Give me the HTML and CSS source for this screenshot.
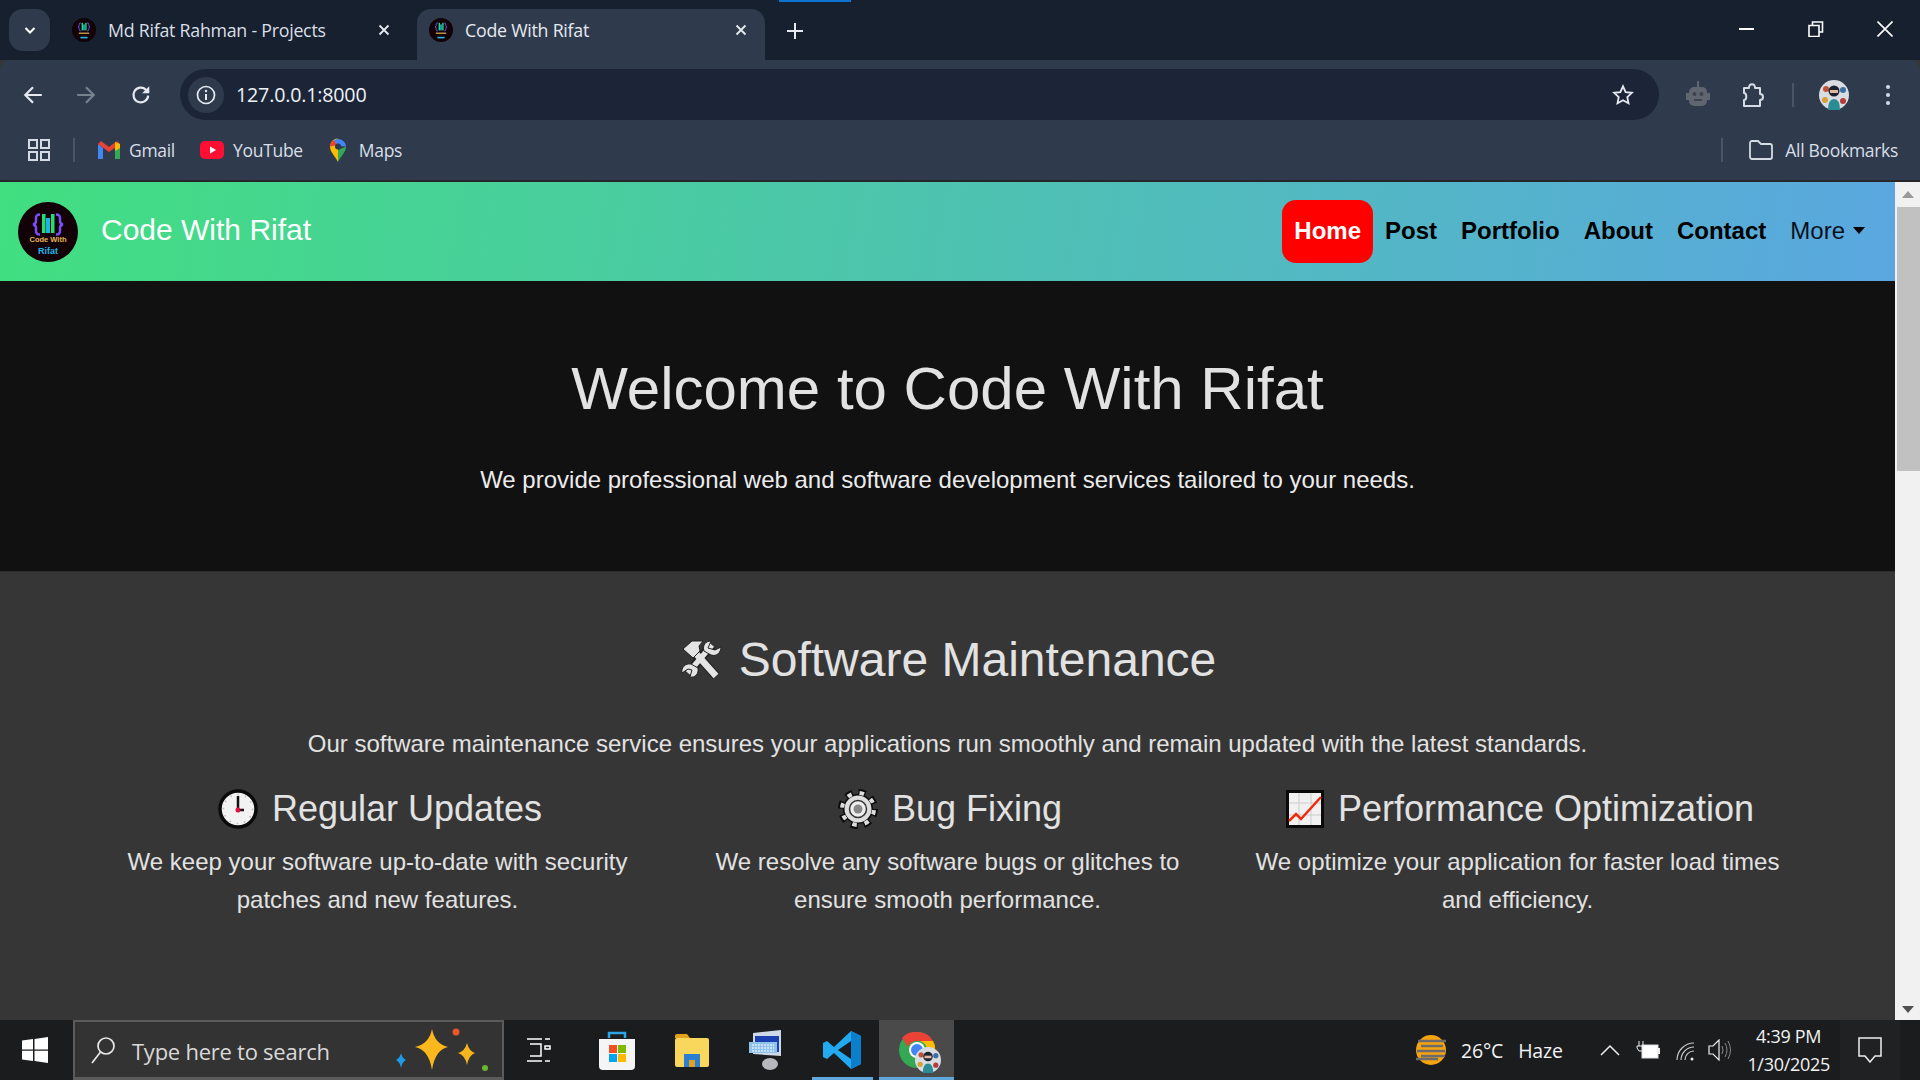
FILE: index.html
```html
<!doctype html>
<html lang="en">
<head>
  <meta charset="utf-8" />
  <meta name="viewport" content="width=device-width, initial-scale=1" />
  <title>Code With Rifat</title>
  <link rel="stylesheet" href="styles.css">
</head>
<body>
  <svg class="defs" width="0" height="0" aria-hidden="true">
    <symbol id="logo-mark" viewBox="0 0 60 60">
      <circle cx="30" cy="30" r="30" fill="#120207"/>
      <path d="M22 12.500q-4 0-4 3.500v3q0 3-3 3.500 3 .5 3 3.500v3q0 3.500 4 3.500M38 12.500q4 0 4 3.500v3q0 3 3 3.500-3 .5-3 3.500v3q0 3.500-4 3.500" fill="none" stroke="#7c4dff" stroke-width="2.400"/>
      <rect x="24" y="12" width="3.500" height="19" fill="#1fe070"/>
      <rect x="28" y="16" width="4" height="15" fill="#1eb4e6"/>
      <rect x="33" y="12" width="3.500" height="19" fill="#1fe070"/>
    </symbol>
    <symbol id="avatar" viewBox="0 0 30 30">
      <circle cx="15" cy="15" r="15" fill="#d9dde2"/>
      <circle cx="7" cy="9" r="3" fill="#c0523c"/>
      <circle cx="24" cy="10" r="3" fill="#3a6ea5"/>
      <circle cx="6" cy="20" r="3" fill="#d4a037"/>
      <circle cx="24" cy="21" r="3" fill="#b43c3c"/>
      <path d="M9 30 q0-11 6-11 t6 11z" fill="#2a8d96"/>
      <circle cx="15" cy="11" r="5.500" fill="#1d2430"/>
      <rect x="11" y="10" width="8" height="3" fill="#e3b8a0"/>
    </symbol>
  </svg>

  <div class="tabstrip">
    <button class="tabs-menu" aria-label="Search tabs">
      <svg width="14" height="14" viewBox="0 0 14 14"><path d="M2.500 5l4.500 4.500L11.500 5" fill="none" stroke="#fff" stroke-width="2"/></svg>
    </button>
    <div class="tab">
      <svg class="favicon" viewBox="0 0 60 60"><use href="#logo-mark"/><path d="M17 38h26" stroke="#e8b45a" stroke-width="3"/><path d="M21 49h18" stroke="#22b8e8" stroke-width="4"/></svg>
      <span class="tab-title">Md Rifat Rahman - Projects</span>
      <svg class="tab-close" viewBox="0 0 12 12"><path d="M1.500 1.500l9 9M10.500 1.500l-9 9" stroke="#e6eaf0" stroke-width="1.800"/></svg>
    </div>
    <div class="tab active">
      <svg class="favicon" viewBox="0 0 60 60"><use href="#logo-mark"/><path d="M17 38h26" stroke="#e8b45a" stroke-width="3"/><path d="M21 49h18" stroke="#22b8e8" stroke-width="4"/></svg>
      <span class="tab-title">Code With Rifat</span>
      <svg class="tab-close" viewBox="0 0 12 12"><path d="M1.500 1.500l9 9M10.500 1.500l-9 9" stroke="#e6eaf0" stroke-width="1.800"/></svg>
    </div>
    <svg class="new-tab" width="16" height="16" viewBox="0 0 16 16"><path d="M8 0v16M0 8h16" stroke="#e6eaf0" stroke-width="2"/></svg>
    <div class="load-bar"></div>
    <div class="win-btns">
      <svg width="16" height="16" viewBox="0 0 16 16"><path d="M0 8h15" stroke="#fff" stroke-width="2"/></svg>
      <svg width="16" height="16" viewBox="0 0 16 16"><path d="M1 4.500h10v11H1zM4.500 4V1h10v10H11.500" fill="none" stroke="#fff" stroke-width="1.600"/></svg>
      <svg width="16" height="16" viewBox="0 0 16 16"><path d="M.5.500l15 15M15.500.500l-15 15" stroke="#fff" stroke-width="1.600"/></svg>
    </div>
  </div>

  <div class="toolbar">
    <svg class="nav-ico back" viewBox="0 0 20 20"><path d="M18 10H3M10 3l-7 7 7 7" fill="none" stroke="#e6eaf0" stroke-width="2"/></svg>
    <svg class="nav-ico forward" viewBox="0 0 20 20"><path d="M2 10h15M10 3l7 7-7 7" fill="none" stroke="#78828f" stroke-width="2"/></svg>
    <svg class="nav-ico reload" viewBox="0 0 20 20"><path d="M16.500 10.500a6.700 6.700 0 1 1-2-5.300L17 7.500" fill="none" stroke="#e6eaf0" stroke-width="2"/><path d="M17.500 2v6.500H11z" fill="#e6eaf0"/></svg>
    <div class="omnibox">
      <span class="site-info">
        <svg width="20" height="20" viewBox="0 0 20 20"><circle cx="10" cy="10" r="8.500" fill="none" stroke="#e6eaf0" stroke-width="1.700"/><path d="M10 9v6" stroke="#e6eaf0" stroke-width="2"/><circle cx="10" cy="6" r="1.200" fill="#e6eaf0"/></svg>
      </span>
      <span class="url">127.0.0.1:8000</span>
      <svg class="star" width="22" height="22" viewBox="0 0 24 24"><path d="M12 2.500l2.900 6.300 6.800.8-5 4.700 1.300 6.800-6-3.400-6 3.400 1.300-6.800-5-4.700 6.800-.8z" fill="none" stroke="#e6eaf0" stroke-width="2"/></svg>
    </div>
    <div class="toolbar-right">
      <svg width="24" height="28" viewBox="0 0 24 28"><path d="M12 0v6" stroke="#5f6670" stroke-width="2"/><rect x="3" y="6" width="18" height="19" rx="5" fill="#5f6670"/><rect x="0" y="12" width="3" height="7" fill="#5f6670"/><rect x="21" y="12" width="3" height="7" fill="#5f6670"/><circle cx="8.500" cy="13" r="2" fill="#3d444e"/><circle cx="15.500" cy="13" r="2" fill="#3d444e"/><path d="M8 19h8" stroke="#3d444e" stroke-width="2"/></svg>
      <svg width="24" height="26" viewBox="0 0 24 26"><path d="M3 6h5c0-5 6-5 6 0h5v6c4 0 4 6 0 6v6H3v-6c3 0 3-7 0-7z" fill="none" stroke="#d4dbe4" stroke-width="2" stroke-linejoin="round"/></svg>
      <span class="tool-sep"></span>
      <svg class="avatar"><use href="#avatar"/></svg>
      <svg width="6" height="24" viewBox="0 0 6 24"><circle cx="3" cy="4" r="2" fill="#d4dbe4"/><circle cx="3" cy="12" r="2" fill="#d4dbe4"/><circle cx="3" cy="20" r="2" fill="#d4dbe4"/></svg>
    </div>
  </div>

  <div class="bookmarks">
    <svg class="apps" width="22" height="22" viewBox="0 0 22 22"><g fill="none" stroke="#d4dbe4" stroke-width="2"><rect x="1" y="1" width="8" height="8"/><rect x="13" y="1" width="8" height="8"/><rect x="1" y="13" width="8" height="8"/><rect x="13" y="13" width="8" height="8"/></g></svg>
    <span class="bm-sep"></span>
    <span class="bm gmail">
      <svg width="22" height="18" viewBox="0 0 22 18"><path d="M0 3v15h5V7z" fill="#4285f4"/><path d="M22 3v15h-5V7z" fill="#34a853"/><path d="M0 3l11 8 11-8-3-3-8 6-8-6z" fill="#ea4335"/><path d="M17 1l5 2v4l-5 3z" fill="#fbbc04"/></svg>
      Gmail
    </span>
    <span class="bm youtube">
      <svg width="24" height="18" viewBox="0 0 24 18"><rect width="24" height="18" rx="5" fill="#ff0f33"/><path d="M10 5.500l6 3.500-6 3.500z" fill="#fff"/></svg>
      YouTube
    </span>
    <span class="bm maps">
      <svg width="18" height="24" viewBox="0 0 18 24"><path d="M9 24C6 18 1 14 1 8.500A8 8 0 0 1 9 .5z" fill="#fbbc04"/><path d="M9 24c3-6 8-10 8-15.500L9 12z" fill="#34a853"/><path d="M1 8.500A8 8 0 0 1 5 2l4 5z" fill="#ea4335"/><path d="M5 2a8 8 0 0 1 12 6.500L9 8z" fill="#4285f4"/><circle cx="9" cy="8.500" r="3" fill="#2f3b4d"/></svg>
      Maps
    </span>
    <span class="bm-sep right"></span>
    <span class="bm all">
      <svg width="24" height="20" viewBox="0 0 24 20"><path d="M1 3a2 2 0 0 1 2-2h6l3 3h9a2 2 0 0 1 2 2v11a2 2 0 0 1-2 2H3a2 2 0 0 1-2-2z" fill="none" stroke="#d4dbe4" stroke-width="1.800"/></svg>
      All Bookmarks
    </span>
  </div>

  <div class="viewport">
    <div class="page">
      <nav class="navbar">
        <svg class="logo" viewBox="0 0 60 60">
          <use href="#logo-mark"/>
          <text x="30" y="40" class="logo-line1">Code With</text>
          <text x="30" y="52" class="logo-line2">Rifat</text>
        </svg>
        <a class="brand">Code With Rifat</a>
        <ul class="nav-links">
          <li class="current">Home</li>
          <li>Post</li>
          <li>Portfolio</li>
          <li>About</li>
          <li>Contact</li>
          <li class="more">More<span class="caret"></span></li>
        </ul>
      </nav>

      <header class="hero">
        <h1>Welcome to Code With Rifat</h1>
        <p>We provide professional web and software development services tailored to your needs.</p>
      </header>

      <section class="service">
        <h2>
          <svg width="44" height="42" viewBox="0 0 44 42">
            <g fill="none" stroke-linejoin="round">
              <path d="M12 9L37 37M33 6L9 34" stroke="#222" stroke-width="9"/>
              <path d="M12 9L37 37" stroke="#e4e4e4" stroke-width="6.500"/>
              <path d="M33 6L9 34" stroke="#e4e4e4" stroke-width="5.500"/>
            </g>
            <path d="M4 10L13 2h11l-4 5 1 5-7 7z" fill="#e4e4e4" stroke="#222"/>
            <path d="M29 9l3-7c-5 0-9 4-7 10l7 4c6 2 10-3 10-8l-6 3z" fill="#e4e4e4" stroke="#222"/>
            <path d="M13 31l-2 7c5 1 9-3 8-9l-7-4c-6-1-10 4-9 9l6-4z" fill="#e4e4e4" stroke="#222"/>
          </svg>
          Software Maintenance
        </h2>
        <p class="intro">Our software maintenance service ensures your applications run smoothly and remain updated with the latest standards.</p>
        <div class="features">
          <div class="feature">
            <h3>
              <svg width="40" height="40" viewBox="0 0 40 40"><circle cx="20" cy="20" r="18" fill="#f2f2f2" stroke="#0a0a0a" stroke-width="3.500"/><circle cx="20" cy="20" r="14.500" fill="none" stroke="#bbb" stroke-width="1.500" stroke-dasharray="1.500 6"/><path d="M20 7v14h6" fill="none" stroke="#111" stroke-width="2.500"/><circle cx="20" cy="21" r="2.500" fill="#e0103a"/></svg>
              Regular Updates
            </h3>
            <p>We keep your software up-to-date with security patches and new features.</p>
          </div>
          <div class="feature">
            <h3>
              <svg width="40" height="40" viewBox="0 0 40 40"><circle cx="20" cy="20" r="16.500" fill="none" stroke="#0a0a0a" stroke-width="7" stroke-dasharray="7 5.960"/><circle cx="20" cy="20" r="15" fill="#0a0a0a"/><circle cx="20" cy="20" r="16" fill="none" stroke="#ddd" stroke-width="4" stroke-dasharray="4.500 8.070" stroke-dashoffset="-1.100"/><circle cx="20" cy="20" r="13.500" fill="#ddd"/><circle cx="20" cy="20" r="8.500" fill="#eee" stroke="#333" stroke-width="1.500"/><circle cx="20" cy="20" r="4.500" fill="#888"/></svg>
              Bug Fixing
            </h3>
            <p>We resolve any software bugs or glitches to ensure smooth performance.</p>
          </div>
          <div class="feature">
            <h3>
              <svg width="38" height="38" viewBox="0 0 38 38"><rect x="1.500" y="1.500" width="35" height="35" fill="#f1f1f1" stroke="#0a0a0a" stroke-width="3"/><path d="M13 3v32M25 3v32M3 13h32M3 25h32" stroke="#ccc"/><path d="M3 31l7-7 5 5 20-22" fill="none" stroke="#ee2a10" stroke-width="2.500"/></svg>
              Performance Optimization
            </h3>
            <p>We optimize your application for faster load times and efficiency.</p>
          </div>
        </div>
      </section>
    </div>

    <div class="scrollbar">
      <span class="arrow up"></span>
      <span class="thumb"></span>
      <span class="arrow down"></span>
    </div>
  </div>

  <footer class="taskbar">
    <svg class="start" width="26" height="26" viewBox="0 0 26 26"><path d="M0 3.600l11-1.500v10.300H0zM12.500 1.900L26 0v12.400H12.500zM0 13.800h11v10.100L0 22.400zM12.500 13.800H26V26l-13.500-1.900z" fill="#fff"/></svg>
    <div class="search">
      <svg width="26" height="28" viewBox="0 0 26 28"><circle cx="16" cy="10" r="8" fill="none" stroke="#e8e8e8" stroke-width="1.700"/><path d="M10.500 16L2 27" stroke="#e8e8e8" stroke-width="1.700"/></svg>
      <span>Type here to search</span>
      <svg class="sparkles" width="92" height="46" viewBox="0 0 92 46"><path d="M36 2q3 15 16 18-13 3-16 23-3-20-17-23 14-3 17-18z" fill="#fbb81c"/><path d="M71 16q2 8 8 10-6 2-8 12-2-10-9-12 7-2 9-10z" fill="#f6b51e"/><path d="M5 26q1 5 5 7-4 2-5 8-1-6-5-8 4-2 5-7z" fill="#1e9be8"/><circle cx="60" cy="5" r="3.500" fill="#e8562a"/><circle cx="89" cy="41" r="3" fill="#6cb52e"/></svg>
    </div>
    <div class="task-icons">
      <span class="task view">
        <svg width="24" height="24" viewBox="0 0 24 24"><path d="M0 1h15M0 23h15M3 6h11v12H3M18 1h5M18 8h5v3h-5zM18 23h5" fill="none" stroke="#fff" stroke-width="1.500"/></svg>
      </span>
      <span class="task">
        <svg width="36" height="40" viewBox="0 0 36 40"><path d="M10 8V3h16v5" fill="none" stroke="#2aa5e8" stroke-width="2.500"/><path d="M0 9h36v27a4 4 0 0 1-4 4H4a4 4 0 0 1-4-4z" fill="#f5f5f5"/><rect x="10" y="15" width="8" height="8" fill="#f25022"/><rect x="19" y="15" width="8" height="8" fill="#7fba00"/><rect x="10" y="24" width="8" height="8" fill="#00a4ef"/><rect x="19" y="24" width="8" height="8" fill="#ffb900"/></svg>
      </span>
      <span class="task">
        <svg width="34" height="34" viewBox="0 0 34 34"><path d="M0 3a2 2 0 0 1 2-2h10l3 4H0z" fill="#e6a21a"/><rect y="5" width="34" height="29" rx="2" fill="#f9d65c"/><path d="M9 34V21h16v13h-6v-7h-4v7z" fill="#2a7fd0"/><rect x="14" y="27" width="6" height="7" fill="#e0a11f"/></svg>
      </span>
      <span class="task">
        <svg width="36" height="40" viewBox="0 0 36 40"><path d="M4 3l28-3v26L4 24z" fill="#cfd8e6"/><rect x="6" y="6" width="24" height="16" fill="#1a3fb0"/><rect x="0" y="12" width="28" height="11" fill="#8fc3ea"/><path d="M3 15h22M3 18h22M3 21h22" stroke="#fff" stroke-dasharray="2 1"/><ellipse cx="21" cy="34" rx="8" ry="6" fill="#b5b8bc"/></svg>
      </span>
      <span class="task open">
        <svg width="38" height="38" viewBox="0 0 38 38"><path d="M28 0l10 5v28l-10 5L11 22 4 28l-4-2V12l4-2 7 6z" fill="#23a9f2"/><path d="M28 0l10 5v28l-10 5z" fill="#0b7fcc"/><path d="M28 10L15 19l13 9z" fill="#1a1c1e"/></svg>
      </span>
      <span class="task open current">
        <svg class="chrome" width="36" height="36" viewBox="0 0 36 36"><circle cx="18" cy="18" r="18" fill="#34a853"/><path d="M18 0a18 18 0 0 1 16 9H18a9 9 0 0 0-9 6L3 6a18 18 0 0 1 15-6z" fill="#ea4335"/><path d="M34 9a18 18 0 0 1-14 27l7-14a9 9 0 0 0-9-13z" fill="#fbbc04"/><circle cx="18" cy="18" r="8" fill="#fff"/><circle cx="18" cy="18" r="6" fill="#4285f4"/></svg>
        <svg class="chrome-badge"><use href="#avatar"/></svg>
      </span>
    </div>
    <div class="tray">
      <svg width="32" height="30" viewBox="0 0 32 30"><ellipse cx="16" cy="15" rx="15" ry="15" fill="#f5a30f"/><path d="M3 6h28M6 11h22M2 16h28M6 21h24M1 24h22" stroke="#6c6c6c" stroke-width="2.500"/></svg>
      <span class="weather">26°C<span class="weather-text">Haze</span></span>
      <svg class="chev" width="20" height="12" viewBox="0 0 20 12"><path d="M1 11l9-9 9 9" fill="none" stroke="#eee" stroke-width="1.500"/></svg>
      <svg width="24" height="18" viewBox="0 0 24 18"><path d="M3 0v5M7 0v5M1 5h8v2l-2 3H3L1 7z" fill="none" stroke="#eee" stroke-width="1"/><rect x="6" y="4" width="16" height="13" fill="#fff" stroke="#ddd"/><rect x="22" y="7" width="2" height="6" fill="#eee"/></svg>
      <svg width="22" height="22" viewBox="0 0 22 22"><path d="M3 21a17 17 0 0 1 17-17M7 21A13 13 0 0 1 20 8M11 21a9 9 0 0 1 9-9" fill="none" stroke="#ccc" stroke-width="1.200"/><circle cx="18" cy="20" r="1.500" fill="#eee"/></svg>
      <svg width="24" height="22" viewBox="0 0 24 22"><path d="M1 7h4l6-6v20l-6-6H1z" fill="none" stroke="#eee" stroke-width="1.200"/><path d="M14 7q2 4 0 8M17 4q4 7 0 14M20 2q5 9 0 18" fill="none" stroke="#888"/></svg>
      <div class="clock"><span>4:39 PM</span><span>1/30/2025</span></div>
      <span class="notify">
        <svg width="24" height="26" viewBox="0 0 24 26"><path d="M1 1h22v18h-6l-5 6-5-6H1z" fill="none" stroke="#eee" stroke-width="1.500"/></svg>
      </span>
    </div>
  </footer>
</body>
</html>
```

FILE: styles.css
```css
*{box-sizing:border-box}
html,body{height:100%}
body{
  margin:0; height:1080px; overflow:hidden;
  display:flex; flex-direction:column;
  font-family:"Liberation Sans", Arial, sans-serif;
  background:#363636;
}
.defs{position:absolute}

/* browser chrome */
.tabstrip{
  height:60px; flex:none; background:#16202f; position:relative;
  display:flex; align-items:flex-end; padding-left:9px;
  font-family:"Open Sans", "Noto Sans", sans-serif; font-size:17.800px; color:#d9dfe7;
}
.tabs-menu{
  width:41px; height:42px; border:0; padding:0; margin:0 8px 9px 0; border-radius:14px;
  background:#2f3b4d; display:flex; align-items:center; justify-content:center;
}
.tab{
  width:359px; height:51px; padding:0 27px 9px 14px; border-radius:14px 14px 0 0;
  display:flex; align-items:center;
}
.tab.active{width:348px; padding:0 18px 9px 12px; background:#2f3b4d; color:#e6eaf0}
.favicon{width:24px; height:24px; flex:none}
.tab-title{margin-left:12px; flex:1; letter-spacing:-.25px; white-space:nowrap}
.tab-close{width:12px; height:12px}
.new-tab{margin:0 0 21px 22px}
.load-bar{position:absolute; left:779px; top:0; width:72px; height:2px; background:#0a74d0}
.win-btns{
  margin-left:auto; height:60px; width:181px; padding:21px 27px 0 0;
  display:flex; justify-content:space-between; align-items:flex-start;
}

.toolbar{
  height:62px; flex:none; background:#2f3b4d; border-radius:10px 10px 0 0;
  display:flex; align-items:center; padding:9px 23px 2px 22px;
}
.nav-ico{width:22px; height:22px; flex:none}
.forward{margin-left:31px}
.reload{margin-left:33px}
.omnibox{
  margin-left:28px; width:1479px; height:51px; background:#1b2537; border-radius:26px;
  display:flex; align-items:center; padding:0 25px 0 8px;
  font-family:"Open Sans", "Noto Sans", sans-serif; font-size:19.700px; color:#eef1f5;
}
.site-info{
  width:36px; height:36px; border-radius:50%; background:#2f3b4d;
  display:flex; align-items:center; justify-content:center;
}
.url{margin-left:12px; letter-spacing:-.2px}
.star{margin-left:auto}
.toolbar-right{flex:1; display:flex; align-items:center; padding-left:27px}
.tool-sep{width:2px; height:24px; background:#4a5566; margin:0 25px 0 27px}
.toolbar-right svg:nth-child(2){margin-left:31px}
.avatar{width:30px; height:30px}
.toolbar-right svg:last-child{margin-left:36px}

.bookmarks{
  height:60px; flex:none; background:#2f3b4d; border-bottom:2px solid #26262b;
  display:flex; align-items:center; padding:0 22px 3px 28px;
  font-family:"Open Sans", "Noto Sans", sans-serif; font-size:17.500px; color:#d9dfe7; letter-spacing:-.3px;
}
.bm{display:flex; align-items:center; gap:9px}
.bm-sep{width:2px; height:24px; background:#4a5566; margin:0 23px}
.bm-sep.right{margin:0 26px 0 auto}
.youtube{margin-left:25px; gap:9px}
.maps{margin-left:26px; gap:12px}
.all{gap:12px}

/* page */
.viewport{flex:1; min-height:0; display:flex}
.page{flex:1; min-width:0; color:#e2e2e2}

.navbar{
  height:99px; padding:0 18px;
  background:linear-gradient(100deg, #41df80, #5aa7e0);
  display:flex; align-items:center;
}
.logo{width:60px; height:60px; flex:none}
.logo-line1, .logo-line2{font-weight:700; text-anchor:middle}
.logo-line1{font-size:7.500px; fill:#e8b45a}
.logo-line2{font-size:9px; fill:#22b8e8}
.brand{margin:-4px 0 0 23px; font-size:30px; color:#fff}
.nav-links{
  margin:0 0 0 auto; padding:0; list-style:none;
  display:flex; align-items:center;
  font-size:24px; font-weight:700; color:#000;
}
.nav-links li{padding:0 12px; margin-top:-2px}
.nav-links .current{
  background:#f00; color:#fff; height:63px; line-height:61px; padding:0 12px; border-radius:14px; margin-top:-1px;
}
.nav-links .more{font-weight:400; color:#0b1020; display:flex; align-items:center}
.caret{
  width:0; height:0; margin-left:8px;
  border-top:7px solid #000; border-left:6px solid transparent; border-right:6px solid transparent;
}

.hero{
  height:291px; background:#111; border-bottom:1px solid #2c2c2c; text-align:center; padding-top:72px;
}
.hero h1{margin:0; font-size:60px; font-weight:400; line-height:72px}
.hero p{margin:36px 0 0; font-size:24px; line-height:38px; color:#ececec}

.service{text-align:center; padding-top:56px}
.service h2{
  margin:0; font-size:48px; font-weight:400; line-height:64px;
  display:flex; justify-content:center; align-items:center; gap:16px;
}
.intro{margin:33px 0 0; font-size:24px; line-height:38px}
.features{width:1710px; margin:19px auto 0; display:grid; grid-template-columns:repeat(3, 1fr)}
.feature{padding:0 15px}
.feature h3{
  margin:0; padding-left:5px; font-size:36px; font-weight:400; line-height:54px;
  display:flex; justify-content:center; align-items:center; gap:14px; white-space:nowrap;
}
.feature p{margin:7px 0 0; font-size:24px; line-height:38px}

.scrollbar{
  width:25px; flex:none; background:#f1f1f1; display:flex; flex-direction:column; align-items:center;
}
.arrow{width:0; height:0; border-left:6px solid transparent; border-right:6px solid transparent}
.arrow.up{border-bottom:7px solid #9a9a9a; margin:9px 0}
.arrow.down{border-top:7px solid #505050; margin:auto 0 7px}
.thumb{width:23px; height:264px; background:#c1c1c1; margin-left:2px}

/* windows taskbar */
.taskbar{
  height:60px; flex:none; background:#1a1c1e; position:relative;
  display:flex; align-items:center; color:#f2f2f2;
  font-family:"Open Sans", "Noto Sans", sans-serif;
}
.start{margin-left:22px}
.search{
  width:431px; height:60px; margin-left:25px; padding:0 14px 0 15px;
  background:#333; border:2px solid #5b5b5b; border-bottom-width:3px;
  display:flex; align-items:center; font-size:22px; color:#d9d9d9;
}
.search span{margin:3px 0 0 16px; letter-spacing:-.25px}
.sparkles{margin-left:auto}
.task-icons{display:flex; height:60px}
.task{
  width:75px; height:60px; display:flex; align-items:center; justify-content:center; position:relative;
}
.task.view{padding-right:5px}
.task.open::after{
  content:""; position:absolute; left:8px; right:6px; bottom:0; height:3px; background:#60a8dc;
}
.task.current{background:#4a4a4a}
.task.current::after{left:0; right:0}
.chrome-badge{position:absolute; left:36px; top:24px; width:26px; height:32px}
.tray{flex:1; display:flex; align-items:center; height:60px; padding:0 20px 0 461px}
.weather{margin-left:14px; font-size:19.500px; letter-spacing:-.2px; white-space:nowrap}
.weather-text{margin-left:15px}
.chev{margin-left:37px}
.tray svg:nth-of-type(3){margin-left:16px}
.tray svg:nth-of-type(4){margin-left:14px}
.tray svg:nth-of-type(5){margin-left:12px}
.clock{
  width:100px; margin-left:7px; display:flex; flex-direction:column; align-items:center; gap:5px;
  font-size:18px; line-height:23px; letter-spacing:-.3px;
}
.notify{
  margin-left:auto; width:60px; height:60px; background:#1f2123;
  display:flex; align-items:center; justify-content:center;
}
```
